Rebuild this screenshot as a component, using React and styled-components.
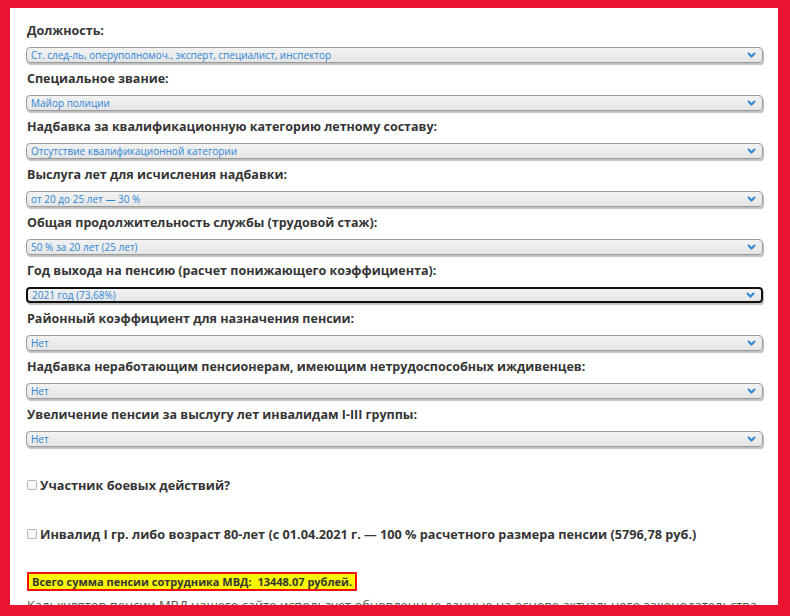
import React from "react";
import styled, { createGlobalStyle } from "styled-components";

const GlobalStyle = createGlobalStyle`
    html, body {
        margin: 0;
        padding: 0;
        background: #ec1330;
    }
    * {
        box-sizing: border-box;
    }
`

const Frame = styled.div`
    width: 790px;
    height: 616px;
    padding: 8px 12px 11px 10px;
    background: #ec1330;
`

const Panel = styled.div`
    height: 100%;
    overflow: hidden;
    background: #fff;
    padding: 13px 15px 0 16px;
    font-family: "Open Sans", "Liberation Sans", sans-serif;
    color: #353535;
`

const Field = styled.div`
    display: flex;
    flex-direction: column;
    gap: 6px;
    margin-bottom: 6px;
`

const Label = styled.div`
    height: 20px;
    line-height: 20px;
    padding-left: 1px;
    font-size: 12.5px;
    font-weight: 700;
`

const SelectBox = styled.div`
    display: flex;
    align-items: center;
    justify-content: space-between;
    height: 16px;
    padding: 0 4px 0 4px;
    border: ${p => (p.$focused ? "2px solid #111" : "1px solid #9a9a9a")};
    border-radius: 4px;
    background: linear-gradient(#f2f2f2, #e6e6e6);
    box-shadow: 1px 2px 1px rgba(0, 0, 0, 0.25);
    color: #2f86d6;
    font-size: 10px;
    span {
        white-space: nowrap;
    }
    svg {
        flex: none;
        margin-right: 2px;
    }
`

const Checks = styled.div`
    display: flex;
    flex-direction: column;
    gap: 29px;
    margin-top: 28px;
`

const CheckRow = styled.label`
    display: flex;
    align-items: center;
    gap: 3px;
    height: 20px;
    padding-left: 1px;
    font-size: 12.7px;
    font-weight: 700;
`

const Box = styled.span`
    width: 10px;
    height: 10px;
    border: 1px solid #b5b5b5;
    border-radius: 2px;
    background: #fafafa;
`

const Total = styled.div`
    display: inline-block;
    margin-top: 28px;
    margin-left: 1px;
    padding: 0 3px;
    height: 19px;
    line-height: 15px;
    border: 2px solid #f01010;
    background: #f7f700;
    font-size: 11px;
    font-weight: 700;
    white-space: pre;
`

const Note = styled.p`
    margin: 4px 0 0 1px;
    font-size: 12.9px;
    line-height: 20px;
    color: #555;
    white-space: nowrap;
`

const Chevron = () => (
    <svg width="9" height="6" viewBox="0 0 9 6">
        <path d="M1 1 L4.5 4.5 L8 1" fill="none" stroke="#2f86d6" strokeWidth="2" />
    </svg>
)

const fields = [
    ["Должность:", "Ст. след-ль, оперуполномоч., эксперт, специалист, инспектор"],
    ["Специальное звание:", "Майор полиции"],
    ["Надбавка за квалификационную категорию летному составу:", "Отсутствие квалификационной категории"],
    ["Выслуга лет для исчисления надбавки:", "от 20 до 25 лет — 30 %"],
    ["Общая продолжительность службы (трудовой стаж):", "50 % за 20 лет (25 лет)"],
    ["Год выхода на пенсию (расчет понижающего коэффициента):", "2021 год (73,68%)", true],
    ["Районный коэффициент для назначения пенсии:", "Нет"],
    ["Надбавка неработающим пенсионерам, имеющим нетрудоспособных иждивенцев:", "Нет"],
    ["Увеличение пенсии за выслугу лет инвалидам I-III группы:", "Нет"],
]

export default function App() {
    return (
        <Frame>
            <GlobalStyle />
            <Panel>
                {fields.map(([label, value, focused]) => (
                    <Field key={label}>
                        <Label>{label}</Label>
                        <SelectBox $focused={focused}>
                            <span>{value}</span>
                            <Chevron />
                        </SelectBox>
                    </Field>
                ))}
                <Checks>
                    <CheckRow><Box />Участник боевых действий?</CheckRow>
                    <CheckRow><Box />Инвалид I гр. либо возраст 80-лет (с 01.04.2021 г. — 100 % расчетного размера пенсии (5796,78 руб.)</CheckRow>
                </Checks>
                <Total>{"Всего сумма пенсии сотрудника МВД:  13448.07 рублей."}</Total>
                <Note>Калькулятор пенсии МВД нашего сайте использует обновленные данные на основе актуального законодательства.</Note>
            </Panel>
        </Frame>
    )
}
